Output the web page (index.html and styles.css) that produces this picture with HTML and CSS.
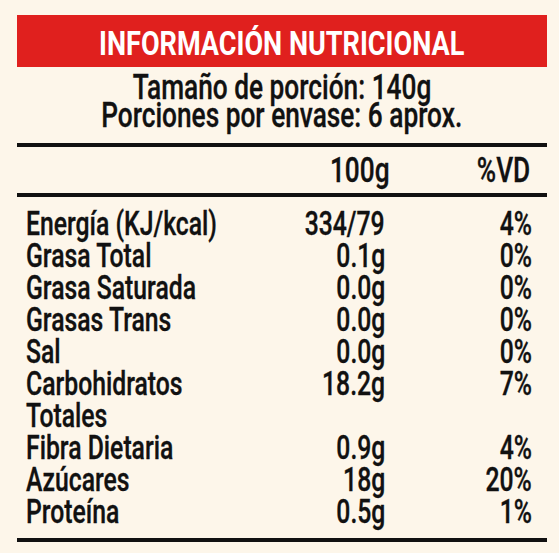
FILE: index.html
```html
<!DOCTYPE html>
<html lang="es">
<head>
<meta charset="utf-8">
<title>Información nutricional</title>
<link rel="stylesheet" href="styles.css">
</head>
<body>
<div class="label">
  <div class="title-bar"><span class="sx">INFORMACIÓN NUTRICIONAL</span></div>
  <div class="serving">
    <div><span class="sx">Tamaño de porción: 140g</span></div>
    <div><span class="sx">Porciones por envase: 6 aprox.</span></div>
  </div>
  <div class="rule top"></div>
  <div class="grid head">
    <div class="n"></div>
    <div class="v"><span class="sx">100g</span></div>
    <div class="d"><span class="sx">%VD</span></div>
  </div>
  <div class="rule"></div>
  <div class="grid body-rows">
    <div class="n"><span class="sx">Energía (KJ/kcal)</span></div>
    <div class="v"><span class="sx">334/79</span></div>
    <div class="d"><span class="sx">4%</span></div>

    <div class="n"><span class="sx">Grasa Total</span></div>
    <div class="v"><span class="sx">0.1g</span></div>
    <div class="d"><span class="sx">0%</span></div>

    <div class="n"><span class="sx">Grasa Saturada</span></div>
    <div class="v"><span class="sx">0.0g</span></div>
    <div class="d"><span class="sx">0%</span></div>

    <div class="n"><span class="sx">Grasas Trans</span></div>
    <div class="v"><span class="sx">0.0g</span></div>
    <div class="d"><span class="sx">0%</span></div>

    <div class="n"><span class="sx">Sal</span></div>
    <div class="v"><span class="sx">0.0g</span></div>
    <div class="d"><span class="sx">0%</span></div>

    <div class="n"><span class="sx">Carbohidratos Totales</span></div>
    <div class="v"><span class="sx">18.2g</span></div>
    <div class="d"><span class="sx">7%</span></div>

    <div class="n"><span class="sx">Fibra Dietaria</span></div>
    <div class="v"><span class="sx">0.9g</span></div>
    <div class="d"><span class="sx">4%</span></div>

    <div class="n"><span class="sx">Azúcares</span></div>
    <div class="v"><span class="sx">18g</span></div>
    <div class="d"><span class="sx">20%</span></div>

    <div class="n"><span class="sx">Proteína</span></div>
    <div class="v"><span class="sx">0.5g</span></div>
    <div class="d"><span class="sx">1%</span></div>
  </div>
  <div class="rule"></div>
</div>
</body>
</html>
```
FILE: styles.css
```css
html, body {
  margin: 0;
  background: #fdf6ea;
}
body {
  font-family: Roboto, "Liberation Sans", sans-serif;
  color: #111;
}
.label {
  width: 530px;
  margin-left: 17px;
  padding-top: 15px;
}
.sx {
  display: inline-block;
  white-space: nowrap;
  transform: scaleX(0.75);
  transform-origin: center;
  -webkit-text-stroke: 0.35px currentColor;
}
.title-bar {
  background: #e0201e;
  height: 47px;
  padding-top: 5px;
  line-height: 47px;
  text-align: center;
  color: #fff;
  font-weight: 700;
  font-size: 33px;
}
.title-bar .sx {
  transform: scaleX(0.82);
  -webkit-text-stroke: 0;
}
.serving {
  margin-top: 7px;
  text-align: center;
  font-size: 35px;
  line-height: 28px;
  font-weight: 500;
}
.rule {
  height: 4px;
  background: #111;
}
.rule.top {
  margin-top: 13px;
}
.grid {
  display: grid;
  grid-template-columns: 270px 89px 147px;
  font-weight: 500;
}
.head {
  padding: 8px 0 6px 9px;
  font-size: 35px;
  line-height: 32px;
}
.body-rows {
  padding: 11px 0 10px 9px;
  font-size: 33px;
  line-height: 32px;
}
.v, .d {
  display: flex;
  justify-content: flex-end;
}
.v .sx, .d .sx {
  transform-origin: right;
}
.n .sx {
  display: block;
  white-space: normal;
  transform-origin: left;
}
.head .v {
  margin-right: -5px;
}
.head .d {
  margin-right: 2px;
}
```
